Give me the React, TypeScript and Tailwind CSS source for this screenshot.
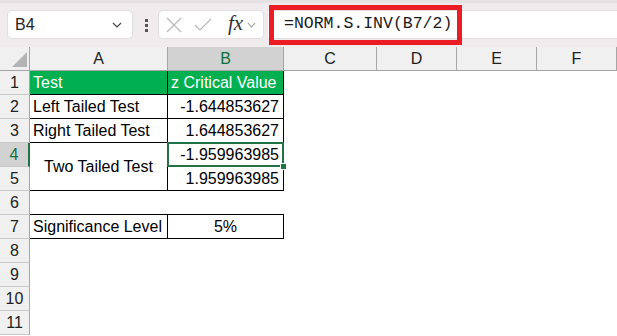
import React from "react";

const cols = ["A", "B", "C", "D", "E", "F"];
const font = { fontFamily: '"Liberation Sans", Arial, sans-serif' };

function Corner() {
  return (
    <div className="relative bg-[#f0f0f0] border-r border-b border-[#a6a6a6]">
      <svg width="30" height="24" className="absolute left-0 top-0">
        <polygon points="12,20 27,5 27,20" fill="#b4b4b4" />
      </svg>
    </div>
  );
}

function RowHead({ n, active }: { n: number; active?: boolean }) {
  return (
    <div
      className={`flex items-center justify-center border-b border-[#c9c9c9] text-[16px] ${
        active
          ? "bg-[#d2d2d2] text-[#0f703b] border-r-2 border-r-[#217346]"
          : "bg-[#f0f0f0] text-[#222] border-r border-r-[#a6a6a6]"
      }`}
    >
      {n}
    </div>
  );
}

function Cell({
  children,
  cls = "",
}: {
  children?: React.ReactNode;
  cls?: string;
}) {
  return <div className={`flex items-center text-[16px] text-black whitespace-nowrap ${cls}`}>{children}</div>;
}

export default function App() {
  return (
    <div className="w-[617px] h-[336px] overflow-hidden bg-white" style={font}>
      {/* formula toolbar */}
      <div className="relative h-[47px] bg-[#f0ecee] border-t-[3px] border-[#e6e2e4] flex items-start pt-[7px]">
        <div className="ml-[7px] w-[126px] h-[29px] bg-white rounded-[5px] border border-[#e2dee0] flex items-center justify-between pl-[7px] pr-[10px]">
          <span className="text-[16px] text-[#222]">B4</span>
          <svg width="10" height="6" viewBox="0 0 10 6">
            <path d="M1 1 L5 5 L9 1" fill="none" stroke="#444" strokeWidth="1.2" />
          </svg>
        </div>
        <div className="ml-[12px] mt-[9px] flex flex-col gap-[2px]">
          <span className="w-[3px] h-[3px] bg-[#555]" />
          <span className="w-[3px] h-[3px] bg-[#555]" />
          <span className="w-[3px] h-[3px] bg-[#555]" />
        </div>
        <div className="ml-[10px] w-[106px] h-[29px] bg-white rounded-[5px] border border-[#e2dee0] flex items-center pl-[7px]">
          <svg width="16" height="16" viewBox="0 0 16 16">
            <path d="M1 1 L15 15 M15 1 L1 15" stroke="#b8b8b8" strokeWidth="1.2" />
          </svg>
          <svg width="18" height="14" viewBox="0 0 18 14" className="ml-[12px]">
            <path d="M1 7 L6 12 L17 1" fill="none" stroke="#b8b8b8" strokeWidth="1.2" />
          </svg>
          <span
            className="ml-[16px] italic text-[21px] text-[#333] leading-none -mt-[3px]"
            style={{ fontFamily: '"Liberation Serif", "Times New Roman", serif' }}
          >
            fx
          </span>
          <svg width="9" height="6" viewBox="0 0 9 6" className="ml-[4px]">
            <path d="M1 1 L4.5 5 L8 1" fill="none" stroke="#999" strokeWidth="1.1" />
          </svg>
        </div>
        <div className="ml-[4px] flex-1 h-[29px] bg-white border-y border-[#e2dee0] flex items-center pl-[16px]">
          <span
            className="text-[16.5px] text-[#1a1a1a]"
            style={{ fontFamily: '"Liberation Mono", "Courier New", monospace' }}
          >
            =NORM.S.INV(B7/2)
          </span>
        </div>
        {/* red highlight */}
        <div className="absolute left-[269px] top-[2px] w-[193px] h-[40px] border-[5px] border-[#ec1c24]" />
      </div>

      {/* sheet */}
      <div className="grid grid-cols-[30px_138px_116px_93px_80px_80px_80px] grid-rows-[24px_repeat(11,24px)]">
        <Corner />
        {cols.map((c) => (
          <div
            key={c}
            className={`flex items-center justify-center text-[16px] border-r border-b border-[#a6a6a6] ${
              c === "B" ? "bg-[#d2d2d2] text-[#0f703b]" : "bg-[#f0f0f0] text-[#222]"
            }`}
          >
            {c}
          </div>
        ))}

        {/* row 1 */}
        <RowHead n={1} />
        <Cell cls="bg-[#00b050] text-white! pl-[3px] border-r border-b border-black">Test</Cell>
        <Cell cls="bg-[#00b050] text-white! pl-[3px] border-r border-b border-black">z Critical Value</Cell>
        <Cell />
        <Cell />
        <Cell />
        <Cell />

        {/* row 2 */}
        <RowHead n={2} />
        <Cell cls="pl-[3px] border-r border-b border-black">Left Tailed Test</Cell>
        <Cell cls="justify-end pr-[4px] border-r border-b border-black">-1.644853627</Cell>
        <Cell />
        <Cell />
        <Cell />
        <Cell />

        {/* row 3 */}
        <RowHead n={3} />
        <Cell cls="pl-[3px] border-r border-b border-black">Right Tailed Test</Cell>
        <Cell cls="justify-end pr-[4px] border-r border-b border-black">1.644853627</Cell>
        <Cell />
        <Cell />
        <Cell />
        <Cell />

        {/* row 4 */}
        <RowHead n={4} active />
        <Cell cls="row-span-2 justify-center border-r border-b border-black">Two Tailed Test</Cell>
        <Cell cls="relative justify-end pr-[4px] border-r border-b border-black">
          -1.959963985
          <div className="absolute -left-px -top-px -right-px -bottom-px border-2 border-[#217346]" />
          <div className="absolute -right-[4px] -bottom-[4px] w-[7px] h-[7px] bg-[#217346] border border-white" />
        </Cell>
        <Cell />
        <Cell />
        <Cell />
        <Cell />

        {/* row 5 */}
        <RowHead n={5} />
        <Cell cls="justify-end pr-[4px] border-r border-b border-black">1.959963985</Cell>
        <Cell />
        <Cell />
        <Cell />
        <Cell />

        {/* row 6 */}
        <RowHead n={6} />
        <Cell cls="border-b border-black" />
        <Cell cls="border-b border-black" />
        <Cell />
        <Cell />
        <Cell />
        <Cell />

        {/* row 7 */}
        <RowHead n={7} />
        <Cell cls="pl-[3px] border-r border-b border-black">Significance Level</Cell>
        <Cell cls="justify-center border-r border-b border-black">5%</Cell>
        <Cell />
        <Cell />
        <Cell />
        <Cell />

        {[8, 9, 10, 11].map((n) => (
          <React.Fragment key={n}>
            <RowHead n={n} />
            <Cell />
            <Cell />
            <Cell />
            <Cell />
            <Cell />
            <Cell />
          </React.Fragment>
        ))}
      </div>
    </div>
  );
}
